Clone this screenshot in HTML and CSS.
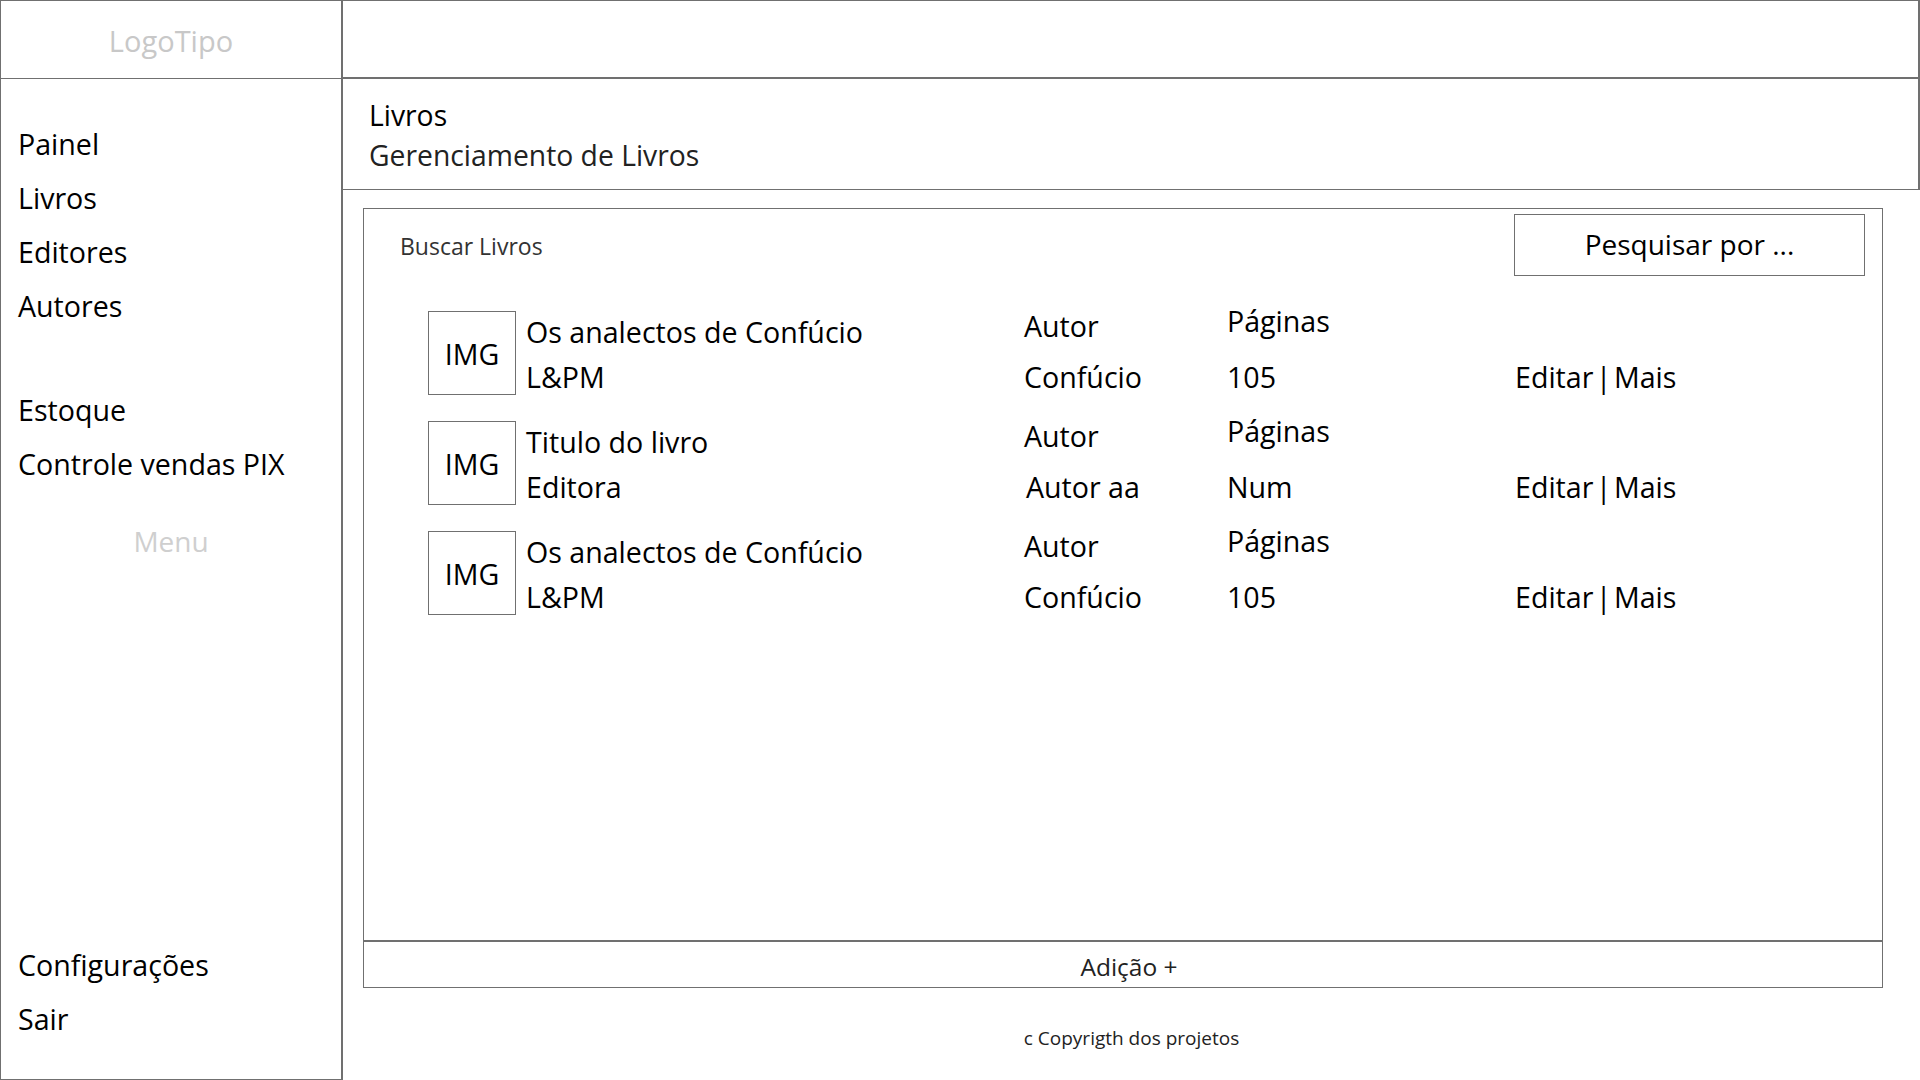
FILE: index.html
```html
<!DOCTYPE html>
<html lang="pt-BR">
<head>
<meta charset="utf-8">
<title>Livros - Gerenciamento de Livros</title>
<link rel="stylesheet" href="styles.css">
</head>
<body>
<div class="app">
  <aside class="sidebar">
    <div class="logo">LogoTipo</div>
    <nav class="nav">
      <div class="nav-group">
        <a class="nav-item">Painel</a>
        <a class="nav-item">Livros</a>
        <a class="nav-item">Editores</a>
        <a class="nav-item">Autores</a>
      </div>
      <div class="nav-group second">
        <a class="nav-item">Estoque</a>
        <a class="nav-item">Controle vendas PIX</a>
      </div>
      <div class="menu-label">Menu</div>
      <div class="nav-group bottom">
        <a class="nav-item">Configurações</a>
        <a class="nav-item">Sair</a>
      </div>
    </nav>
  </aside>
  <main class="main">
    <header class="topbar"></header>
    <section class="page-title">
      <div class="crumb">Livros</div>
      <div class="subtitle">Gerenciamento de Livros</div>
    </section>
    <div class="content">
      <section class="panel">
        <div class="panel-head">
          <div class="panel-title">Buscar Livros</div>
          <div class="search">Pesquisar por ...</div>
        </div>
        <div class="list">
          <div class="book">
            <div class="cover">IMG</div>
            <div class="c-title l1 t">Os analectos de Confúcio</div>
            <div class="c-author l1 a">Autor</div>
            <div class="c-pages l1 p">Páginas</div>
            <div class="c-title l2">L&amp;PM</div>
            <div class="c-author l2">Confúcio</div>
            <div class="c-pages l2">105</div>
            <div class="c-actions l2">Editar | Mais</div>
          </div>
          <div class="book">
            <div class="cover">IMG</div>
            <div class="c-title l1 t">Titulo do livro</div>
            <div class="c-author l1 a">Autor</div>
            <div class="c-pages l1 p">Páginas</div>
            <div class="c-title l2">Editora</div>
            <div class="c-author l2 shift">Autor aa</div>
            <div class="c-pages l2">Num</div>
            <div class="c-actions l2">Editar | Mais</div>
          </div>
          <div class="book">
            <div class="cover">IMG</div>
            <div class="c-title l1 t">Os analectos de Confúcio</div>
            <div class="c-author l1 a">Autor</div>
            <div class="c-pages l1 p">Páginas</div>
            <div class="c-title l2">L&amp;PM</div>
            <div class="c-author l2">Confúcio</div>
            <div class="c-pages l2">105</div>
            <div class="c-actions l2">Editar | Mais</div>
          </div>
        </div>
        <div class="add">Adição +</div>
      </section>
    </div>
    <footer class="footer">c Copyrigth dos projetos</footer>
  </main>
</div>
</body>
</html>
```
FILE: styles.css
```css
* { box-sizing: border-box; }
html, body { margin: 0; padding: 0; }
body {
  width: 1920px;
  height: 1080px;
  overflow: hidden;
  background: #fff;
  color: #000;
  font-family: "Open Sans", "Noto Sans", sans-serif;
}
.app {
  display: grid;
  grid-template-columns: 343px 1fr;
  height: 1080px;
}
.sidebar {
  display: flex;
  flex-direction: column;
  border-left: 1px solid #707070;
  border-top: 1px solid #707070;
  border-bottom: 1px solid #707070;
  border-right: 2px solid #707070;
  height: 1080px;
}
.logo {
  height: 78px;
  border-bottom: 1px solid #707070;
  display: flex;
  align-items: center;
  justify-content: center;
  font-size: 29px;
  color: #c8c8c8;
  padding-top: 1px;
}
.nav {
  flex: 1;
  display: flex;
  flex-direction: column;
  padding: 38px 0 33px 17px;
}
.nav-group { display: flex; flex-direction: column; }
.nav-group.second { margin-top: 50px; }
.nav-group.bottom { margin-top: auto; }
.nav-item {
  font-size: 28.6px;
  line-height: 54px;
  height: 54px;
  color: #000;
  white-space: nowrap;
}
.menu-label {
  margin-top: 23px;
  margin-left: -17px;
  text-align: center;
  font-size: 28px;
  line-height: 54px;
  color: #cfcfcf;
}
.main {
  display: flex;
  flex-direction: column;
  min-width: 0;
}
.topbar {
  height: 79px;
  border-top: 1px solid #707070;
  border-right: 2px solid #707070;
  border-bottom: 2px solid #707070;
}
.page-title {
  height: 111px;
  border-right: 2px solid #707070;
  border-bottom: 1px solid #707070;
  padding: 16px 0 0 26px;
}
.crumb, .subtitle {
  font-size: 28.3px;
  line-height: 40px;
  white-space: nowrap;
}
.crumb { color: #000; }
.subtitle { color: #222; }
.content {
  padding: 18px 37px 0 20px;
}
.panel {
  height: 780px;
  border: 1px solid #707070;
  display: flex;
  flex-direction: column;
}
.panel-head {
  display: flex;
  justify-content: space-between;
  align-items: center;
  padding: 5px 17px 0 36px;
}
.panel-title {
  font-size: 23px;
  color: #333;
  padding-top: 2px;
}
.search {
  width: 351px;
  height: 62px;
  border: 1px solid #707070;
  display: flex;
  align-items: center;
  justify-content: center;
  font-size: 28px;
  color: #000;
  padding-bottom: 2px;
}
.list {
  flex: 1;
  display: flex;
  flex-direction: column;
  gap: 26px;
  padding: 35px 0 0 64px;
}
.book {
  display: grid;
  grid-template-columns: 88px 508px 203px 288px 1fr;
  grid-template-rows: 44px 40px;
  font-size: 28.6px;
  white-space: nowrap;
}
.cover {
  grid-row: 1 / 3;
  grid-column: 1;
  width: 88px;
  height: 84px;
  border: 1px solid #707070;
  display: flex;
  align-items: center;
  justify-content: center;
  font-size: 28.6px;
  padding-top: 1px;
}
.c-title { grid-column: 2; padding-left: 10px; }
.c-author { grid-column: 3; }
.c-pages { grid-column: 4; }
.c-actions { grid-column: 5; word-spacing: -5px; }
.l1 { grid-row: 1; align-self: start; }
.l2 { grid-row: 2; line-height: 44px; align-self: start; }
.t { line-height: 42px; }
.a { line-height: 30px; }
.p { line-height: 20px; }
.shift { padding-left: 2px; }
.add {
  height: 47px;
  border-top: 2px solid #707070;
  display: flex;
  align-items: center;
  justify-content: center;
  font-size: 24.5px;
  color: #222;
  padding-left: 12px;
  padding-top: 3px;
}
.footer {
  padding-top: 38px;
  text-align: center;
  font-size: 19px;
  line-height: 24px;
  color: #222;
}
```
